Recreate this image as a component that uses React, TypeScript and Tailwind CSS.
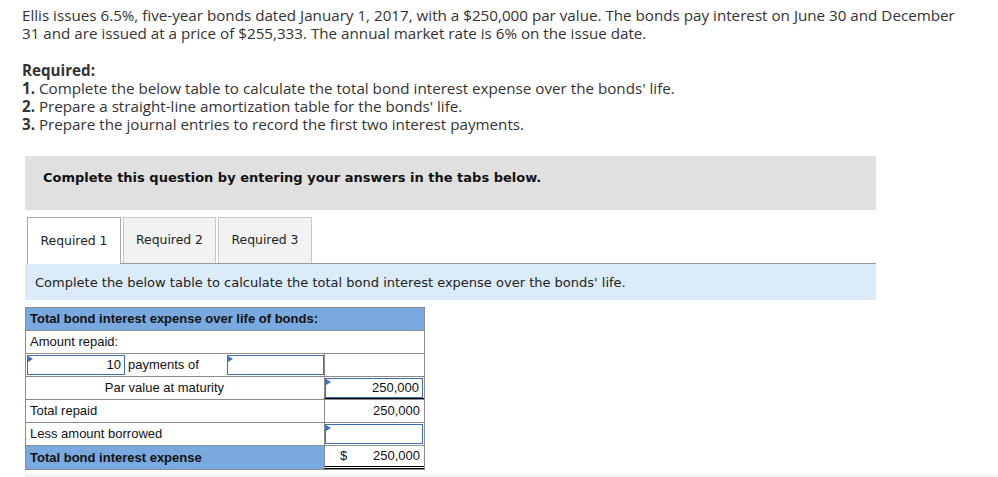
import React from 'react'

const Flag = () => (
    <span className="absolute left-0 top-0 w-0 h-0 border-t-[3px] border-b-[3px] border-l-[5px] border-t-transparent border-b-transparent border-l-[#3d72c0]" />
)

const InputBox = ({ value, className = '' }: { value?: string; className?: string }) => (
    <div className={`relative h-full border border-[#3f6db3] flex items-center justify-end pr-[3px] ${className}`}>
        <Flag />
        {value}
    </div>
)

export default function App() {
    return (
        <div className="w-[998px] h-[477px] bg-white overflow-hidden relative">
            {/* Problem text */}
            <div className="pl-[22px] pt-[6px] text-[15.2px] leading-[18px] text-[#333] whitespace-nowrap" style={{ fontFamily: '"Open Sans", sans-serif' }}>
                <p>
                    Ellis issues 6.5%, five-year bonds dated January 1, 2017, with a $250,000 par value. The bonds pay interest on June 30 and December
                    <br />
                    31 and are issued at a price of $255,333. The annual market rate is 6% on the issue date.
                </p>
                <p className="mt-[19px] font-bold">Required:</p>
                <p><b>1.</b> Complete the below table to calculate the total bond interest expense over the bonds' life.</p>
                <p><b>2.</b> Prepare a straight-line amortization table for the bonds' life.</p>
                <p><b>3.</b> Prepare the journal entries to record the first two interest payments.</p>
            </div>

            <div className="ml-[25px] w-[851px]" style={{ fontFamily: '"DejaVu Sans", Verdana, sans-serif' }}>
                {/* Instruction box */}
                <div className="mt-[23px] h-[54px] bg-[#e0e0e0] pt-[14px] pl-[18px] text-[13px] leading-[16px] font-bold text-[#111]">
                    Complete this question by entering your answers in the tabs below.
                </div>

                {/* Tabs */}
                <div className="mt-[7px] flex items-end h-[47px]">
                    <div className="ml-[2px] w-[94px] h-[47px] bg-white border border-b-0 border-[#a8a8a8] flex items-center justify-center pt-px text-[12.4px] text-[#222]">
                        Required 1
                    </div>
                    <div className="flex-1 h-[47px] flex items-end border-b border-[#999]">
                        <div className="ml-[2px] w-[93px] h-[46px] bg-[#f2f2f2] border border-b-0 border-[#c8c8c8] flex items-center justify-center text-[12.4px] text-[#222]">
                            Required 2
                        </div>
                        <div className="ml-[2px] w-[94px] h-[46px] bg-[#f2f2f2] border border-b-0 border-[#c8c8c8] flex items-center justify-center text-[12.4px] text-[#222]">
                            Required 3
                        </div>
                    </div>
                </div>
                <div className="h-[36px] bg-[#dcebf8] flex items-center pl-[10px] pt-[2px] text-[13px] text-[#222]">
                    Complete the below table to calculate the total bond interest expense over the bonds' life.
                </div>

                {/* Table */}
                <div className="mt-[7px] w-[400px] border border-[#8c8c8c] text-[13px] text-[#111]" style={{ fontFamily: '"Liberation Sans", Arial, sans-serif' }}>
                    <div className="h-[23px] bg-[#7aa9df] border-b border-[#8c8c8c] flex items-center pl-[4px] font-bold">
                        Total bond interest expense over life of bonds:
                    </div>
                    <div className="h-[23px] border-b border-[#8c8c8c] flex items-center pl-[4px]">
                        Amount repaid:
                    </div>
                    <div className="h-[23px] border-b border-[#8c8c8c] flex">
                        <div className="w-[298px] flex items-stretch py-px pl-px">
                            <InputBox value="10" className="w-[98px]" />
                            <div className="w-[102px] flex items-center pl-[3px]">payments of</div>
                            <InputBox className="w-[97px]" />
                        </div>
                        <div className="border-l border-[#8c8c8c] flex-1" />
                    </div>
                    <div className="h-[23px] border-b border-[#8c8c8c] flex">
                        <div className="w-[298px] flex items-center">
                            <div className="w-[200px] text-right pr-[2px]">Par value at maturity</div>
                        </div>
                        <div className="border-l border-[#8c8c8c] flex-1 pt-px pr-px border-b border-b-black">
                            <InputBox value="250,000" />
                        </div>
                    </div>
                    <div className="h-[23px] border-b border-[#8c8c8c] flex">
                        <div className="w-[298px] flex items-center pl-[4px]">Total repaid</div>
                        <div className="border-l border-[#8c8c8c] flex-1 flex items-center justify-end pr-[4px]">250,000</div>
                    </div>
                    <div className="h-[23px] border-b border-[#8c8c8c] flex">
                        <div className="w-[298px] flex items-center pl-[4px]">Less amount borrowed</div>
                        <div className="border-l border-[#8c8c8c] flex-1 py-px pr-px">
                            <InputBox />
                        </div>
                    </div>
                    <div className="h-[23px] flex">
                        <div className="w-[298px] bg-[#7aa9df] flex items-center pl-[4px] font-bold">Total bond interest expense</div>
                        <div className="border-l border-[#8c8c8c] flex-1 flex items-center justify-between pl-[15px] pr-[4px] border-b-[3px] border-double border-b-black">
                            <span>$</span>
                            <span>250,000</span>
                        </div>
                    </div>
                </div>
            </div>
            <div className="absolute left-[25px] right-0 bottom-0 h-[3px] bg-[#f2f2f2]" />
        </div>
    )
}
